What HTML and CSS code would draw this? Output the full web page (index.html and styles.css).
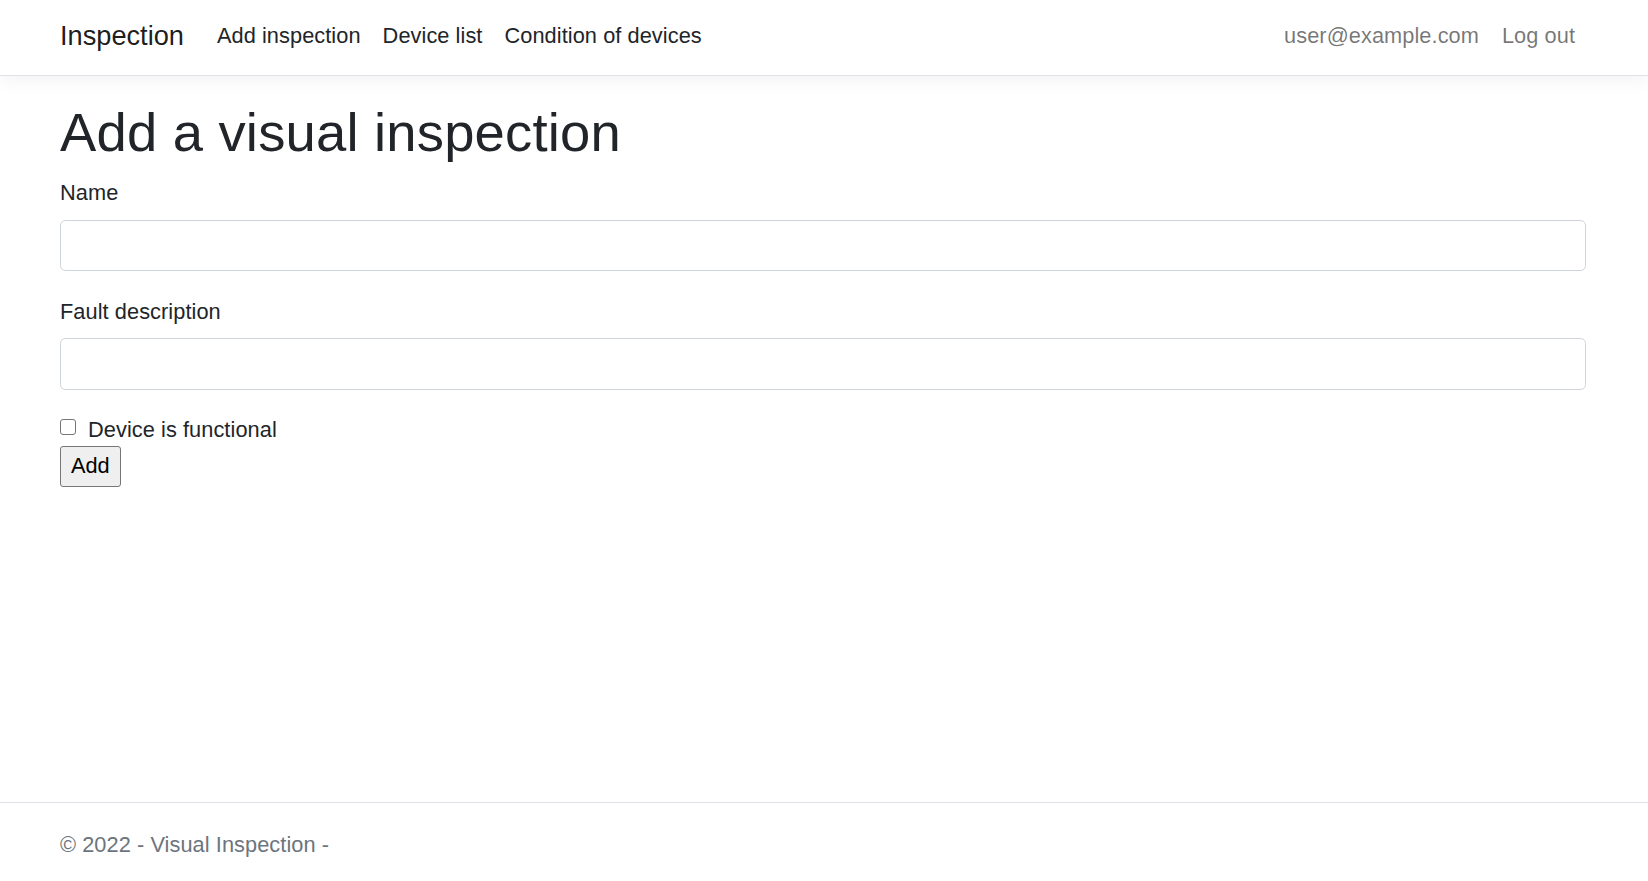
FILE: index.html
```html
<!DOCTYPE html>
<html lang="en">
<head>
<meta charset="utf-8">
<title>Add a visual inspection - Visual Inspection</title>
<link rel="stylesheet" href="styles.css">
</head>
<body>
<header class="navbar">
  <div class="container nav-inner">
    <a class="brand" href="#">Inspection</a>
    <ul class="nav nav-main">
      <li><a class="nav-link dark" href="#">Add inspection</a></li>
      <li><a class="nav-link dark" href="#">Device list</a></li>
      <li><a class="nav-link dark" href="#">Condition of devices</a></li>
    </ul>
    <ul class="nav nav-user">
      <li><a class="nav-link muted" href="#">user@example.com</a></li>
      <li><a class="nav-link muted" href="#">Log out</a></li>
    </ul>
  </div>
</header>
<main class="container main">
  <h1 class="title">Add a visual inspection</h1>
  <form class="form">
    <div class="group">
      <label class="label" for="name">Name</label>
      <input class="control" id="name" type="text">
    </div>
    <div class="group">
      <label class="label" for="fault">Fault description</label>
      <input class="control" id="fault" type="text">
    </div>
    <div class="check-row">
      <input class="check" id="functional" type="checkbox">
      <label class="check-label" for="functional">Device is functional</label>
    </div>
    <button class="btn" type="button">Add</button>
  </form>
</main>
<footer class="footer">
  <div class="container">© 2022 - Visual Inspection -</div>
</footer>
</body>
</html>
```
FILE: styles.css
```css
* { box-sizing: border-box; }
html, body { margin: 0; padding: 0; }
body {
  font-family: "Liberation Sans", Arial, sans-serif;
  font-size: 21.75px;
  line-height: 1.5;
  letter-spacing: 0.07px;
  color: #212529;
  background: #fff;
  min-height: 100vh;
  display: flex;
  flex-direction: column;
}
a { text-decoration: none; }
.container {
  width: 100%;
  padding-left: 60px;
  padding-right: 62px;
}
.navbar {
  height: 76px;
  border-bottom: 1px solid #dee2e6;
  box-shadow: 0 5px 16px rgba(0, 0, 0, 0.05);
  background: #fff;
  position: relative;
  z-index: 1;
}
.nav-inner {
  height: 75px;
  padding-bottom: 2px;
  display: flex;
  align-items: center;
}
.brand {
  font-size: 27.2px;
  letter-spacing: 0;
  color: rgba(0, 0, 0, 0.9);
  margin-right: 22px;
  line-height: 1.5;
}
.nav {
  list-style: none;
  margin: 0;
  padding: 0;
  display: flex;
}
.nav-main { flex: 1; }
.nav-link {
  display: block;
  padding: 0 11px;
}
.dark { color: #212529; }
.muted { color: rgba(0, 0, 0, 0.55); }
.nav-user li + li { margin-left: 1px; }
.main {
  flex: 1;
  padding-top: 24px;
}
.title {
  font-size: 54.4px;
  font-weight: 400;
  line-height: 1.2;
  letter-spacing: 0.2px;
  margin: 0 0 12px;
}
.form { margin: 0; }
.group { margin-bottom: 25px; }
.group + .group { margin-bottom: 22.5px; }
.label {
  display: inline-block;
  margin-bottom: 10px;
}
.group + .group .label { margin-bottom: 9.5px; }
.control {
  display: block;
  width: 100%;
  height: 51.3px;
  padding: 8px 16px;
  font: inherit;
  color: #212529;
  border: 1px solid #ced4da;
  border-radius: 5.4px;
  background: #fff;
}
.check-row {
  display: flex;
  align-items: flex-start;
  height: 32.6px;
}
.check {
  appearance: none;
  -webkit-appearance: none;
  width: 16px;
  height: 16px;
  margin: 7px 12px 0 0;
  border: 1px solid #767676;
  border-radius: 3px;
  background: #fff;
  flex: none;
}
.check-label { padding-top: 2px; }
.btn {
  display: block;
  margin-top: 1.3px;
  font: inherit;
  line-height: 1.5;
  color: #000;
  background: #efefef;
  border: 1px solid #767676;
  border-radius: 3px;
  padding: 3px 10px;
  height: 40.7px;
}
.footer {
  border-top: 1px solid #dee2e6;
  color: #6c757d;
  height: 79px;
  padding-top: 6px;
  line-height: 72px;
  white-space: nowrap;
}
```
